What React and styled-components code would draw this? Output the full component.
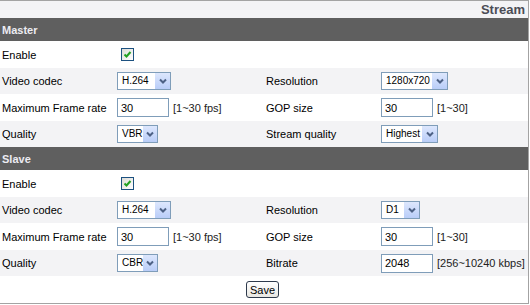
import React from "react";
import styled, { createGlobalStyle } from "styled-components";

const GlobalStyle = createGlobalStyle`
	body {
		margin: 0;
		background: #fff;
		font-family: "Liberation Sans", Arial, sans-serif;
	}
`;

const Frame = styled.div`
	width: 529px;
	box-sizing: border-box;
	border-top: 1px solid #a3a3a3;
	border-right: 1px solid #a3a3a3;
	border-bottom: 1px solid #a3a3a3;
	font-size: 11px;
	color: #000;
`;

const TitleBar = styled.div`
	height: 17px;
	background: #f3f3f5;
	display: flex;
	align-items: center;
	justify-content: flex-end;
	padding-right: 3px;
	font-size: 13px;
	font-weight: bold;
	color: #4b4d55;
`;

const SectionHeader = styled.div`
	height: 23px;
	background: #5f5f5f;
	color: #ececf2;
	font-weight: bold;
	font-size: 11px;
	display: flex;
	align-items: center;
	padding-left: 2px;
`;

const Row = styled.div`
	display: grid;
	grid-template-columns: 115px 149px 115px 1fr;
	align-items: center;
	height: ${p => (p.$tall ? 27 : 26)}px;
	background: ${p => (p.$shade ? "#f3f3f5" : "#fff")};
`;

const Label = styled.div`
	padding-left: 2px;
	white-space: nowrap;
`;

const Control = styled.div`
	padding-left: 2px;
	display: flex;
	align-items: center;
	white-space: nowrap;
`;

const CheckBox = styled.span`
	margin-left: 4px;
	width: 13px;
	height: 13px;
	box-sizing: border-box;
	border: 1px solid #1c5180;
	background: linear-gradient(135deg, #dcdcd7, #fff);
	display: flex;
	align-items: center;
	justify-content: center;
`;

const SelectBox = styled.div`
	display: inline-flex;
	width: ${p => p.$w}px;
	height: 18px;
	box-sizing: border-box;
	border: 1px solid #7f9db9;
	background: #fff;
	font-size: 10px;
`;

const SelectText = styled.span`
	flex: 1;
	padding-left: 4px;
	line-height: 16px;
`;

const SelectArrow = styled.span`
	width: 15px;
	height: 16px;
	background: linear-gradient(#dde7fd, #b9cdf8);
	display: flex;
	align-items: center;
	justify-content: center;
`;

const TextInput = styled.input`
	width: 52px;
	height: 19px;
	box-sizing: border-box;
	border: 1px solid #7f9db9;
	padding: 0 3px;
	margin: 0;
	font-family: "Liberation Sans", Arial, sans-serif;
	font-size: 11px;
	color: #000;
	outline: none;
`;

const Hint = styled.span`
	margin-left: 4px;
	color: #222;
`;

const SaveRow = styled.div`
	height: 27px;
	display: flex;
	align-items: center;
	justify-content: center;
`;

const SaveButton = styled.button`
	width: 33px;
	height: 17px;
	padding: 0;
	margin-right: 3px;
	border: 1px solid #2e3a4c;
	border-radius: 3px;
	background: linear-gradient(#ffffff, #e8e7e2);
	font-family: "Liberation Sans", Arial, sans-serif;
	font-size: 11px;
	color: #000;
`;

function Check() {
	return (
		<CheckBox>
			<svg width="9" height="9" viewBox="0 0 9 9">
				<path d="M1.5 4.5 L3.5 6.5 L7.5 2" stroke="#21a121" strokeWidth="2" fill="none" />
			</svg>
		</CheckBox>
	);
}

function Select({ width, value }) {
	return (
		<SelectBox $w={width}>
			<SelectText>{value}</SelectText>
			<SelectArrow>
				<svg width="8" height="6" viewBox="0 0 8 6">
					<path d="M1 1.5 L4 4.5 L7 1.5" stroke="#4d6185" strokeWidth="2" fill="none" />
				</svg>
			</SelectArrow>
		</SelectBox>
	);
}

function Field({ value, hint }) {
	return (
		<>
			<TextInput readOnly value={value} />
			{hint && <Hint>{hint}</Hint>}
		</>
	);
}

function Section({ name, children }) {
	return (
		<>
			<SectionHeader>{name}</SectionHeader>
			{children}
		</>
	);
}

export default function App() {
	return (
		<Frame>
			<GlobalStyle />
			<TitleBar>Stream</TitleBar>

			<Section name="Master">
				<Row $tall>
					<Label>Enable</Label>
					<Control><Check /></Control>
				</Row>
				<Row $shade>
					<Label>Video codec</Label>
					<Control><Select width={54} value="H.264" /></Control>
					<Label>Resolution</Label>
					<Control><Select width={67} value="1280x720" /></Control>
				</Row>
				<Row $tall>
					<Label>Maximum Frame rate</Label>
					<Control><Field value="30" hint="[1~30 fps]" /></Control>
					<Label>GOP size</Label>
					<Control><Field value="30" hint="[1~30]" /></Control>
				</Row>
				<Row $shade>
					<Label>Quality</Label>
					<Control><Select width={41} value="VBR" /></Control>
					<Label>Stream quality</Label>
					<Control><Select width={57} value="Highest" /></Control>
				</Row>
			</Section>

			<Section name="Slave">
				<Row $tall>
					<Label>Enable</Label>
					<Control><Check /></Control>
				</Row>
				<Row $shade>
					<Label>Video codec</Label>
					<Control><Select width={54} value="H.264" /></Control>
					<Label>Resolution</Label>
					<Control><Select width={39} value="D1" /></Control>
				</Row>
				<Row $tall>
					<Label>Maximum Frame rate</Label>
					<Control><Field value="30" hint="[1~30 fps]" /></Control>
					<Label>GOP size</Label>
					<Control><Field value="30" hint="[1~30]" /></Control>
				</Row>
				<Row $shade>
					<Label>Quality</Label>
					<Control><Select width={41} value="CBR" /></Control>
					<Label>Bitrate</Label>
					<Control><Field value="2048" hint="[256~10240 kbps]" /></Control>
				</Row>
			</Section>

			<SaveRow>
				<SaveButton>Save</SaveButton>
			</SaveRow>
		</Frame>
	);
}
